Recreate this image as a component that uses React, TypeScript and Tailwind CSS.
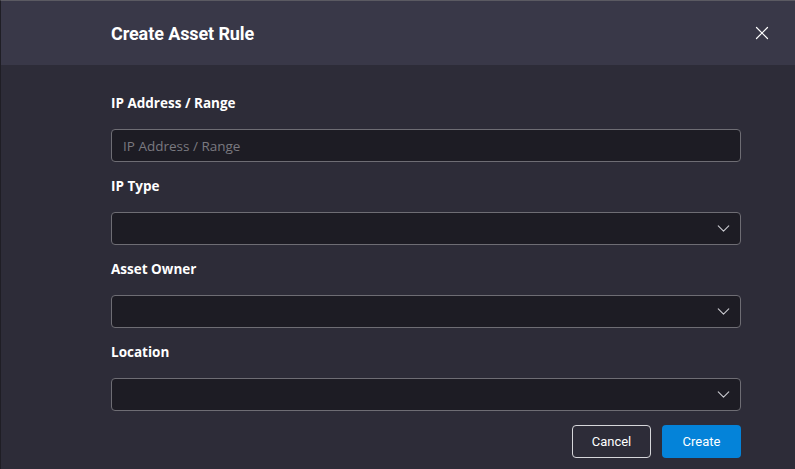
import { ChevronDown, X } from 'lucide-react';

const selects = ['IP Type', 'Asset Owner', 'Location'];

const Label = ({ children }: { children: string }) => (
  <label className="block h-[20px] text-[13.5px] font-bold leading-[20px] text-white [font-family:'Open_Sans',sans-serif]">
    {children}
  </label>
);

const SelectBox = () => (
  <div className="flex h-[33px] items-center justify-end rounded-[4px] border border-[#6e6d74] bg-[#1d1c24] pr-[6px]">
    <ChevronDown className="h-[21px] w-[21px] text-[#c9c9cf]" strokeWidth={1.3} />
  </div>
);

export default function App() {
  return (
    <div className="flex h-[469px] w-[795px] flex-col border-t border-l border-t-[#5b5a62] border-l-[#1f1e25] bg-[#2d2c38]">
      {/* Header */}
      <div className="flex h-[64px] items-center justify-between bg-[#393848] pl-[110px] pr-[22px]">
        <h2 className="text-[18px] font-bold tracking-[-0.1px] text-white [font-family:Roboto,sans-serif]">
          Create Asset Rule
        </h2>
        <button className="text-white">
          <X className="h-[22px] w-[22px]" strokeWidth={1.3} />
        </button>
      </div>

      {/* Body */}
      <div className="flex flex-col pl-[110px] pr-[54px] pt-[28px]">
        <Label>IP Address / Range</Label>
        <input
          placeholder="IP Address / Range"
          className="mt-[16px] h-[33px] w-full rounded-[4px] border border-[#6e6d74] bg-[#1d1c24] px-[11px] text-[13.5px] text-white outline-none placeholder:text-[#7a7980] [font-family:'Open_Sans',sans-serif]"
        />
        {selects.map((s) => (
          <div key={s} className="mt-[14px] flex flex-col">
            <Label>{s}</Label>
            <div className="mt-[16px]">
              <SelectBox />
            </div>
          </div>
        ))}
        <div className="mt-[14px] flex justify-end gap-[11px]">
          <button className="h-[33px] w-[79px] rounded-[4px] border border-[#d6d6da] text-[13px] text-white [font-family:Roboto,sans-serif]">
            Cancel
          </button>
          <button className="h-[33px] w-[79px] rounded-[4px] bg-[#0483d9] text-[13px] text-white [font-family:Roboto,sans-serif]">
            Create
          </button>
        </div>
      </div>
    </div>
  );
}
